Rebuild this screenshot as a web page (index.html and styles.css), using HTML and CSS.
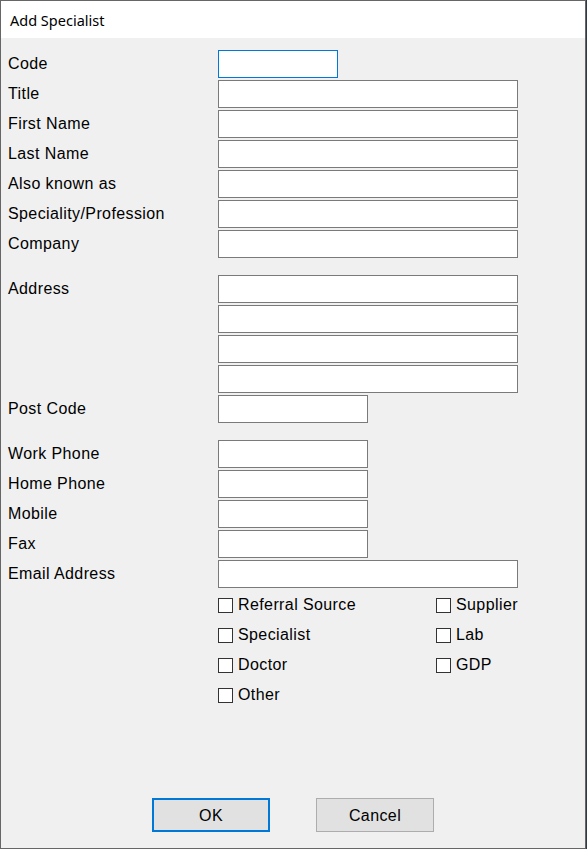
FILE: index.html
```html
<!DOCTYPE html>
<html>
<head>
<meta charset="utf-8">
<title>Add Specialist</title>
<link rel="stylesheet" href="styles.css">
</head>
<body>
<div class="window">
  <div class="titlebar">Add Specialist</div>
  <div class="content">
    <div class="form">
      <div class="group">
        <div class="row"><span class="lbl">Code</span><span class="field w120 focused"></span></div>
        <div class="row"><span class="lbl">Title</span><span class="field w300"></span></div>
        <div class="row"><span class="lbl">First Name</span><span class="field w300"></span></div>
        <div class="row"><span class="lbl">Last Name</span><span class="field w300"></span></div>
        <div class="row"><span class="lbl">Also known as</span><span class="field w300"></span></div>
        <div class="row"><span class="lbl">Speciality/Profession</span><span class="field w300"></span></div>
        <div class="row"><span class="lbl">Company</span><span class="field w300"></span></div>
      </div>
      <div class="group spaced">
        <div class="row"><span class="lbl">Address</span><span class="field w300"></span></div>
        <div class="row"><span class="lbl"></span><span class="field w300"></span></div>
        <div class="row"><span class="lbl"></span><span class="field w300"></span></div>
        <div class="row"><span class="lbl"></span><span class="field w300"></span></div>
        <div class="row"><span class="lbl">Post Code</span><span class="field w150"></span></div>
      </div>
      <div class="group spaced">
        <div class="row"><span class="lbl">Work Phone</span><span class="field w150"></span></div>
        <div class="row"><span class="lbl">Home Phone</span><span class="field w150"></span></div>
        <div class="row"><span class="lbl">Mobile</span><span class="field w150"></span></div>
        <div class="row"><span class="lbl">Fax</span><span class="field w150"></span></div>
        <div class="row"><span class="lbl">Email Address</span><span class="field w300"></span></div>
      </div>
      <div class="checks">
        <label class="check"><span class="box"></span>Referral Source</label>
        <label class="check"><span class="box"></span>Supplier</label>
        <label class="check"><span class="box"></span>Specialist</label>
        <label class="check"><span class="box"></span>Lab</label>
        <label class="check"><span class="box"></span>Doctor</label>
        <label class="check"><span class="box"></span>GDP</label>
        <label class="check"><span class="box"></span>Other</label>
      </div>
    </div>
    <div class="buttons">
      <button class="btn default">OK</button>
      <button class="btn">Cancel</button>
    </div>
  </div>
</div>
</body>
</html>
```

FILE: styles.css
```css
html, body {
  margin: 0;
  padding: 0;
  background: #2e3b44;
}
body {
  width: 587px;
  height: 849px;
  overflow: hidden;
}
.window {
  width: 584px;
  height: 847px;
  border: 1px solid #666666;
  background: #f0f0f0;
  display: flex;
  flex-direction: column;
  font-family: "Liberation Sans", Arial, sans-serif;
  font-size: 16px;
  letter-spacing: 0.4px;
  color: #000;
}
.titlebar {
  height: 37px;
  background: #ffffff;
  font-family: "Segoe UI", "Noto Sans", sans-serif;
  font-size: 14.5px;
  letter-spacing: 0;
  line-height: 38px;
  padding-left: 9px;
  color: #000;
}
.content {
  flex: 1;
  display: flex;
  flex-direction: column;
  padding: 12px 0 0 7px;
}
.form {
  flex: 1;
  display: flex;
  flex-direction: column;
}
.group {
  display: flex;
  flex-direction: column;
  gap: 2px;
}
.group.spaced {
  margin-top: 17px;
}
.row {
  display: flex;
  align-items: flex-start;
  height: 28px;
}
.lbl {
  width: 210px;
  flex: none;
  line-height: 18px;
  padding-top: 5px;
}
.field {
  display: block;
  box-sizing: border-box;
  height: 28px;
  background: #ffffff;
  border: 1px solid #7a7a7a;
}
.field.focused {
  border-color: #0078d7;
}
.w120 { width: 120px; }
.w150 { width: 150px; }
.w300 { width: 300px; }
.checks {
  margin-top: 2px;
  margin-left: 210px;
  display: grid;
  grid-template-columns: 218px 100px;
  grid-auto-rows: 30px;
}
.check {
  display: flex;
  align-items: center;
  gap: 5px;
  line-height: 18px;
}
.box {
  width: 15px;
  height: 15px;
  box-sizing: border-box;
  border: 1px solid #333333;
  background: #ffffff;
  flex: none;
}
.buttons {
  display: flex;
  justify-content: center;
  gap: 46px;
  padding-bottom: 16px;
  padding-right: 7px;
}
.btn {
  width: 118px;
  height: 34px;
  box-sizing: border-box;
  background: #e1e1e1;
  border: 1px solid #adadad;
  font-family: "Liberation Sans", Arial, sans-serif;
  font-size: 16px;
  letter-spacing: 0.4px;
  color: #000;
  padding: 2px 0 0;
  margin: 0;
}
.btn.default {
  border: 2px solid #0078d7;
}
```
